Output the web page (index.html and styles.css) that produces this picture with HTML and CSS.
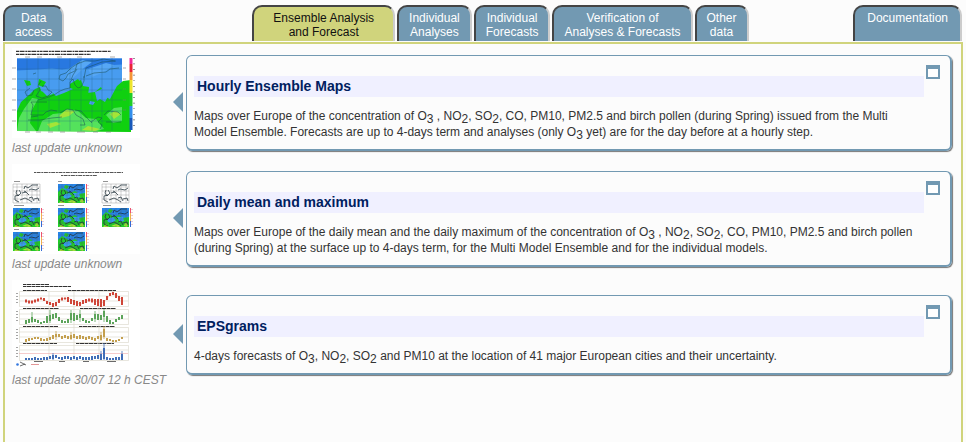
FILE: index.html
```html
<!DOCTYPE html>
<html lang="en">
<head>
<meta charset="utf-8">
<title>Ensemble Analysis and Forecast</title>
<link rel="stylesheet" href="styles.css">
</head>
<body>
<nav class="tabs">
  <a class="tab" href="#data">Data<br>access</a>
  <div class="tab-group">
    <a class="tab current" href="#ensemble">Ensemble Analysis<br>and Forecast</a>
    <a class="tab" href="#analyses">Individual<br>Analyses</a>
    <a class="tab" href="#forecasts">Individual<br>Forecasts</a>
    <a class="tab" href="#verification">Verification of<br>Analyses &amp; Forecasts</a>
    <a class="tab" href="#other">Other<br>data</a>
  </div>
  <a class="tab docs" href="#documentation">Documentation</a>
</nav>
<main class="panel">
  <section class="row">
    <figure class="preview">
      <svg class="thumb" viewBox="12 48 128 90" aria-hidden="true">
        <path fill="#fff" d="M12 48h128v90H12z"/>
        <path stroke="#333" stroke-width="1.2" stroke-dasharray="3 .6 5 .7 2 .5" d="M16 51.300h95M16 54.300h75"/>
        <path fill="#489cf0" d="M17 58.500h105v72.500H17z"/>
        <path fill="#2878e0" d="M17 58.500h105v6l-18 1-12 4-15-2-15 2-10-1-15 1-20 1z"/>
        <path fill="#56a7f5" d="M70 68l12-8 10 2-8 6-12 11-7-1zM88 69l18-6 8 2-10 7-12 5z"/>
        <path fill="#10d010" d="M17 131V111l4-9 8-7 6-6 5-2 1 4 7 3 3-3 5 5 8-3 9-4 3-7 5-2 2 6 6 1-2 6 8-1 6-5 5 10 4 2 7-13 6-5 8-1v52z"/>
        <path fill="#10d010" d="M24 80l6 1 1 4-4 1zM39 79l7 3-3 5-5-2zM70 84l8-5 3 4-5 7-6-2zM82 89l7-2-1 9-5-1z"/>
        <path fill="#489cf0" d="M43 92l8-4 2 6-6 2zM95 92l9-4 6 5-5 9-5-3-3 2zM90 101l5 1-2 3-4-1zM108 91l4 1-3 8z"/>
        <path fill="#54e25c" d="M17 131l2-13 5-9 8-11 6 1-6 11-2 13 6 8zM42 121l11-7 9-1 5-4 11 2 8 7 10 1 8 10-7 2H38zM106 115l8-7 8-1v14l-9 2z"/>
        <path fill="#a5e537" d="M59 116l7-6 9 1-6 5-8 2zM47 124l9-2 5 2-11 4zM82 130l6-4 12 3-5 2zM110 114l5-3 6 3-7 5z"/>
        <path fill="none" stroke="#174b4e" stroke-width=".5" d="M80 62l-9 6-5 5-6 2-1 4 4 2 3-3 2-4 7-3 2-7 8-3 10 0 9-2 11 2M77 69l-4 6-2 5M84 78l2-10 8-3 8-3 14-1M86 76l8-3 12-1 4-3 9-1M33 74l3-1M41 81l-3 5 2 4-4 6 6 2 6-2 4-4-4-2-2-4-4 0M30 88l-5 4 2 4 5-1 2-5M38 100l8-2 8-3 6-4 5-2M65 89l5-1 0-6 3-3 2 6 3 3 3-1 3-6 0-5M47 102h-16l2 3-2 10h12l3-3 5-2 6 1M60 113l7-4 6 1 3 5 7 4 2 6-5 0M75 110l6 1 7 8 4 4M91 122l7-5 4 1-4 4 4 3-2 4M104 115l4-4 10 1 3 3M106 122h15M31 117l7-1M28 120h12l12-2 10-1"/>
        <path fill="none" stroke="#246080" stroke-width=".3" d="M17 69h105M17 79h105M17 90h105M17 100h105M17 111h105M17 121h105M27 58v73M38 58v73M49 58v73M59 58v73M70 58v73M81 58v73M92 58v73M102 58v73M112 58v73"/>
        <path fill="none" stroke="#777" stroke-width=".6" d="M12 68h4M12 79h4M12 89h4M12 100h4M12 110h4M12 121h4M123 68h3M123 79h3M123 89h3M123 100h3M123 110h3M25 132h5M36 132h5M48 132h5M60 132h5M77 132h8M93 132h5M106 132h5M25 57h5M37 57h5M57 57h5M77 57h5M110 57h5"/>
        <path fill="#1859bb" d="M129.500 118h3v12h-3z"/><path fill="#328eec" d="M129.500 106h3v12h-3z"/><path fill="#20ce28" d="M129.500 93h3v13h-3z"/><path fill="#eee52d" d="M129.500 80h3v13h-3z"/><path fill="#f49436" d="M129.500 72h3v8h-3z"/><path fill="#e92436" d="M129.500 64h3v8h-3z"/><path fill="#f12a99" d="M129.500 58h3v6h-3z"/>
        <path stroke="#444" stroke-width="1.500" stroke-dasharray=".7 4.900" d="M134 58v72"/>
      </svg>
      <figcaption>last update unknown</figcaption>
    </figure>
    <article class="card">
      <div class="content">
        <h2>Hourly Ensemble Maps</h2>
        <p>Maps over Europe of the concentration of O<sub>3</sub> , NO<sub>2</sub>, SO<sub>2</sub>, CO, PM10, PM2.5 and birch pollen (during Spring) issued from the Multi Model Ensemble. Forecasts are up to 4-days term and analyses (only O<sub>3</sub> yet) are for the day before at a hourly step.</p>
      </div>
      <button class="expand" type="button" aria-label="Open Hourly Ensemble Maps"></button>
    </article>
  </section>
  <section class="row">
    <figure class="preview">
      <svg class="thumb" viewBox="12 164 128 90" aria-hidden="true">
        <defs>
          <g id="coast" fill="none" stroke="#182b35" stroke-width=".75"><path d="M4 6l-1 3 2 3 3-3-2-3M9 9l4-1 3 3M11 5l1-3 3 2 4-3 6 0M16 6l2-1 5 1 3-2M13 8l-2-1M6 11l-4 1v4l4 2M7 16l5-2 4 2 3 2M16 14l3-1 2 4M21 15l4-1 1 3"/><path stroke="#555" stroke-width=".25" d="M0 3h27M0 7h27M0 11h27M0 15h27M4 0v19M9 0v19M14 0v19M19 0v19M24 0v19"/></g>
          <g id="mini">
            <path fill="#2685e9" d="M0 0h27v19H0z"/><path fill="#20cd29" d="M0 8l4-4 5 3 3 2 5-2 4 3 6-1v10H0zM7 1l4 1-2 3-3-1z"/><path fill="#369cf0" d="M5 11l6-2 3 3-4 3-4-1zM15 9h6l1 4-4 1z"/><path fill="#a9df38" d="M1 19l3-3 3 3zM9 18l5-2 5 2-3 1zM23 15l3 1-1 3-3-1z"/><use href="#coast"/>
            <path fill="#346bd5" d="M28 13h1v6h-1z"/><path fill="#f0b04e" d="M28 5h1v8h-1z"/><path fill="#ed526f" d="M28 0h1v5h-1z"/><path stroke="#dc9bac" stroke-width="1" stroke-dasharray="1 2" d="M30 1v17"/>
          </g>
          <g id="outline"><path fill="#fff" stroke="#888" stroke-width=".4" d="M0 0h27v19H0z"/><use href="#coast"/></g>
        </defs>
        <path fill="#fff" d="M12 164h128v90H12z"/>
        <path stroke="#555" stroke-width="1" stroke-dasharray="2 .6 4 .7" d="M34 172.500h89M61 175.500h36"/>
        <path stroke="#777" stroke-width=".8" d="M14 181.500h6M58 181.500h4M103 181.500h5M14 205.500h10M58 205.500h6M103 205.500h8M14 229.500h5M58 229.500h18"/>
        <use href="#outline" x="13" y="184"/><use href="#mini" x="58" y="184"/><use href="#outline" x="102" y="184"/>
        <use href="#mini" x="13" y="208"/><use href="#mini" x="58" y="208"/><use href="#mini" x="102" y="208"/>
        <use href="#mini" x="13" y="232"/><use href="#mini" x="58" y="232"/>
      </svg>
      <figcaption>last update unknown</figcaption>
    </figure>
    <article class="card">
      <div class="content">
        <h2>Daily mean and maximum</h2>
        <p>Maps over Europe of the daily mean and the daily maximum of the concentration of O<sub>3</sub> , NO<sub>2</sub>, SO<sub>2</sub>, CO, PM10, PM2.5 and birch pollen (during Spring) at the surface up to 4-days term, for the Multi Model Ensemble and for the individual models.</p>
      </div>
      <button class="expand" type="button" aria-label="Open Daily mean and maximum"></button>
    </article>
  </section>
  <section class="row">
    <figure class="preview">
      <svg class="thumb" viewBox="12 280 128 90" aria-hidden="true">
        <path fill="#fff" d="M12 280h128v90H12z"/>
        <path stroke="#333" stroke-width="1" stroke-dasharray="3 .5 5 .5" d="M23 284.500h26M23 286.500h48M23 290.500h24M68 290.500h48M23 308.500h36M80 308.500h36M23 326.500h35M79 326.500h36M23 343.500h34M76 343.500h38"/>
        <path fill="none" stroke="#dedbd0" stroke-width=".7" d="M19.500 291.500h109v15h-109zM19.500 309.500h109v15h-109zM19.500 327.500h109v15h-109zM19.500 345.500h109v15h-109zM19 296h109M19 301h109M19 314h109M19 319h109M19 332h109M19 337h109M19 350h109M49 291v69M74 291v69M99 291v69"/>
        <path stroke="#888" stroke-width="2" stroke-dasharray=".7 2.300" d="M17 293v12M17 311v12M17 329v12M17 347v12"/>
        <path stroke="#f0aaaa" stroke-width=".6" d="M19 353.500h109"/>
        <path fill="none" stroke="#f3b3a7" stroke-width=".5" d="M25 301l6 1 9-3 5 1 6 4 4 0 6-5 8-1 7 5 5 1 8-4 6 1 7 2 5-4 4-6 7 3 5 5"/>
        <path stroke="#cf4638" stroke-width="2" d="M26 299.500v3M29 300.500v3M32 300.500v3M35 299.500v3M38 298.500v3M41 297.500v2M44 298v3M47 301v3M50 302v3M53 303v4M56 302v4M59 299v4M62 297.500v3M65 297.500v2M68 297v5M71 299v5M74 300v5M77 301v5M80 302v4M83 300v4M86 299v4M89 298.500v3M92 298.500v4M95 299v6M98 299v7M101 299v8M104 300v6M107 296v4M110 293v3M113 292v3M116 293v5M119 296v5M122 297v8"/>
        <path stroke="#5da45b" stroke-width="2" d="M26 320v4M29 319v4M32 317v5M35 319v3M38 320v3M41 322v2M44 321v2M47 316v7M50 315v6M53 314v5M56 313v5M59 317v4M62 320v3M65 321v2M68 319v4M71 313v7M74 313v8M77 315v5M80 314v4M83 318v3M86 320v3M89 321v2M92 318v3M95 314v5M98 314v6M101 315v5M104 311v6M107 316v6M110 320v4M113 322v2M116 319v3M119 317v3M122 315v4"/>
        <path stroke="#5da45b" stroke-width=".8" d="M32 312v11M50 310v13M71 310v13M80 310v12M95 311v11M104 309v13"/>
        <path stroke="#c4a04f" stroke-width="2" d="M26 339v3M29 338v3M32 338v2M35 337v2M38 337v2M41 338v3M44 339v2M47 338v3M50 337v3M53 335v4M56 334v3M59 334v3M62 336v3M65 335v3M68 336v3M71 335v4M74 334v4M77 336v3M80 335v4M83 336v3M86 337v3M89 336v3M92 337v3M95 338v3M98 336v3M101 335v5M104 329v8M107 338v3M110 339v2M113 340v2M116 340v2M119 339v2M122 337v2"/>
        <path stroke="#c4a04f" stroke-width=".8" d="M104 326v13M101 332v9M56 331v9M71 332v8"/>
        <path stroke="#416eb8" stroke-width="2" d="M26 358v2M29 358v2M32 358v2M35 357v3M38 358v2M41 358v2M44 357v3M47 357v3M50 356v3M53 355v4M56 355v3M59 357v2M62 357v3M65 356v3M68 356v3M71 357v3M74 356v3M77 357v3M80 356v3M83 357v3M86 357v3M89 357v3M92 356v4M95 356v3M98 355v4M101 354v6M104 348v11M107 357v3M110 358v2M113 358v2M116 357v3M119 357v3M122 354v6"/>
        <path stroke="#416eb8" stroke-width=".8" d="M104 343v17M101 351v9M53 353v7M122 351v9"/>
        <path stroke="#444" stroke-width=".8" d="M34 361.500h9M59 361.500h6M83 361.500h6M107 361.500h9M20 362l6 3M20 366l5-2"/>
        <circle cx="17.500" cy="364.500" r="1.300" fill="#3478df"/><path stroke="#d76b6b" stroke-width=".7" d="M31 364.500h8"/>
      </svg>
      <figcaption>last update 30/07 12 h CEST</figcaption>
    </figure>
    <article class="card">
      <div class="content">
        <h2>EPSgrams</h2>
        <p>4-days forecasts of O<sub>3</sub>, NO<sub>2</sub>, SO<sub>2</sub> and PM10 at the location of 41 major European cities and their uncertainty.</p>
      </div>
      <button class="expand" type="button" aria-label="Open EPSgrams"></button>
    </article>
  </section>
</main>
</body>
</html>
```
FILE: styles.css
```css
* { box-sizing: border-box; }
html { background: #fcfcfc; }
body {
  display: flex;
  flex-direction: column;
  min-height: 100vh;
  margin: 0;
  padding: 5px 3px 0;
  color: #333;
  font: 12px/16px "Liberation Sans", Arial, sans-serif;
}
.tabs { display: flex; padding-right: 1px; margin-bottom: 1px; }
.tab-group { display: flex; gap: 2px; margin-left: 188px; }
.tab {
  min-height: 36px;
  padding: 4px 10px 2px;
  border: 2px solid #444;
  border-right-color: #ccc;
  border-bottom: 0;
  border-radius: 10px 10px 0 0;
  background: #7299b2;
  color: #fff;
  font-size: 12px;
  line-height: 14px;
  text-align: center;
  text-decoration: none;
  white-space: nowrap;
}
.current { padding-right: 19px; padding-left: 19px; background: #d0d47c; color: #111; }
.docs { margin-left: auto; padding-right: 12px; padding-left: 12px; }
.panel { flex: 1; border: 2px solid #d0d47c; border-bottom: 0; padding: 1px 9px 0 7px; }
.row {
  display: grid;
  grid-template-columns: 161px 1fr;
  align-items: center;
  min-height: 116px;
}
.preview { margin: 0; padding-bottom: 3px; }
.thumb { display: block; width: 128px; height: 90px; }
figcaption { margin-top: 2px; color: #888; font-size: 12px; font-style: italic; white-space: nowrap; }
.card {
  position: relative;
  display: flex;
  align-items: flex-start;
  margin-left: 13px;
  padding: 9px 10px 9px 7px;
  border: 1px solid #7299b2;
  border-right-width: 2px;
  border-bottom-width: 2px;
  border-radius: 6px;
  box-shadow: 1px 1px 1px #777;
}
.card::before {
  content: "";
  position: absolute;
  top: calc(50% - 11px);
  left: -14px;
  border: 10px solid transparent;
  border-right-color: #7299b2;
  border-left: 0;
}
.content { flex: 1; padding-top: 11px; }
h2 {
  margin: 0 0 11px;
  padding: 0 3px;
  background: #f0f0ff;
  color: #002060;
  font-size: 14px;
  line-height: 21px;
}
p { margin: 0; padding-right: 8px; }
sub { font-size: 12px; line-height: 0; }
.expand {
  width: 14px;
  height: 14px;
  margin-left: 2px;
  padding: 0;
  border: 2px solid #7299b2;
  border-top-width: 4px;
  background: #fff;
}
```
